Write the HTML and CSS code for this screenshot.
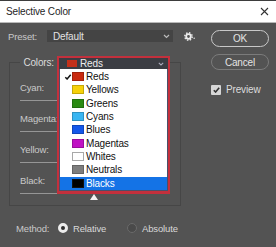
FILE: index.html
```html
<!DOCTYPE html>
<html>
<head>
<meta charset="utf-8">
<link rel="stylesheet" href="styles.css">
</head>
<body>
<div class="window">
  <div class="titlebar">
    <span class="title">Selective Color</span>
    <svg class="close" width="9" height="9" viewBox="0 0 9 9"><path d="M1 1L8 8M8 1L1 8" stroke="#333" stroke-width="1.1" fill="none"/></svg>
  </div>
  <div class="content">
    <div class="main">
      <div class="preset-row">
        <span class="lbl preset-lbl">Preset:</span>
        <div class="preset-select">
          <span>Default</span>
          <svg width="7" height="5" viewBox="0 0 7 5"><path d="M1 1L3.5 3.5L6 1" stroke="#bbb" stroke-width="1.2" fill="none"/></svg>
        </div>
        <svg class="gear" width="12" height="9" viewBox="0 0 12 9"><circle cx="4.5" cy="4.5" r="2.3" fill="none" stroke="#ececec" stroke-width="1.8"/><circle cx="4.5" cy="4.5" r="3.7" fill="none" stroke="#ececec" stroke-width="1.5" stroke-dasharray="1.45 1.46"/><circle cx="10.2" cy="6.2" r="0.8" fill="#d8d8d8"/></svg>
      </div>
      <fieldset class="group">
        <legend class="legend">
          <span class="lbl colors-lbl">Colors:</span>
          <div class="combo">
            <div class="combo-head">
              <span class="head-swatch"></span>
              <span class="head-text">Reds</span>
              <svg class="head-chev" width="6" height="4" viewBox="0 0 6 4"><path d="M0.8 0.8L3 3L5.2 0.8" stroke="#aab" stroke-width="1.1" fill="none"/></svg>
            </div>
            <div class="list">
              <div class="list-inner">
                <div class="item"><svg class="check" width="7" height="6" viewBox="0 0 7 6"><path d="M0.8 3.2L2.6 5L6.2 0.8" stroke="#111" stroke-width="1.5" fill="none"/></svg><span class="sw sw-red"></span>Reds</div>
                <div class="item"><span class="check"></span><span class="sw sw-yellow"></span>Yellows</div>
                <div class="item"><span class="check"></span><span class="sw sw-green"></span>Greens</div>
                <div class="item"><span class="check"></span><span class="sw sw-cyan"></span>Cyans</div>
                <div class="item"><span class="check"></span><span class="sw sw-blue"></span>Blues</div>
                <div class="item"><span class="check"></span><span class="sw sw-magenta"></span>Magentas</div>
                <div class="item"><span class="check"></span><span class="sw sw-white"></span>Whites</div>
                <div class="item"><span class="check"></span><span class="sw sw-neutral"></span>Neutrals</div>
                <div class="item selected"><span class="check"></span><span class="sw sw-black"></span>Blacks</div>
              </div>
            </div>
          </div>
        </legend>
        <div class="sliders">
          <div class="slider-row"><span class="lbl">Cyan:</span><div class="track"><span class="thumb"></span></div></div>
          <div class="slider-row"><span class="lbl">Magenta:</span><div class="track"><span class="thumb"></span></div></div>
          <div class="slider-row"><span class="lbl">Yellow:</span><div class="track"><span class="thumb"></span></div></div>
          <div class="slider-row"><span class="lbl">Black:</span><div class="track"><span class="thumb"></span></div></div>
        </div>
      </fieldset>
      <div class="method-row">
        <span class="lbl method-lbl">Method:</span>
        <span class="opt opt-rel"><span class="radio on"></span>Relative</span>
        <span class="opt"><span class="radio off"></span>Absolute</span>
      </div>
    </div>
    <div class="side">
      <div class="btn btn-ok">OK</div>
      <div class="btn btn-cancel">Cancel</div>
      <div class="preview">
        <span class="cbox"><svg width="7" height="6" viewBox="0 0 7 6"><path d="M0.8 3.2L2.6 5L6.2 0.8" stroke="#333" stroke-width="1.6" fill="none"/></svg></span>
        <span>Preview</span>
      </div>
    </div>
  </div>
</div>
</body>
</html>
```

FILE: styles.css
```css
* { box-sizing: border-box; }
html, body { margin: 0; padding: 0; }
body {
  font-family: "Liberation Sans", Arial, sans-serif;
  font-size: 9.5px;
  letter-spacing: -0.15px;
  background: #535353;
}
.window {
  width: 276px;
  height: 247px;
  background: #535353;
  display: flex;
  flex-direction: column;
  overflow: hidden;
}
.titlebar {
  height: 23px;
  flex: none;
  background: #ffffff;
  border-top: 1px solid #3d3d3d;
  border-bottom: 1px solid #b9b9b9;
  display: flex;
  align-items: center;
  justify-content: space-between;
  padding: 0 7px 0 6px;
  color: #1e1e1e;
  font-size: 10px;
}
.content {
  display: grid;
  grid-template-columns: 203px 58px;
  padding: 7px 7px 0 8px;
  flex: 1;
}
.lbl { color: #c9c9c9; }
.preset-row {
  display: flex;
  align-items: center;
  height: 12px;
}
.preset-lbl { width: 39px; }
.preset-select {
  width: 126px;
  height: 12px;
  background: #444444;
  display: flex;
  align-items: center;
  justify-content: space-between;
  padding: 0 3px 0 6px;
  color: #e2e2e2;
  font-size: 10px;
}
.gear { margin-left: 11px; }

.group {
  margin: 14px 0 0 1px;
  width: 172px;
  min-width: 0;
  border: 1px solid #464646;
  padding: 13px 0 0 10px;
}
.legend {
  padding: 0;
  display: flex;
  align-items: center;
}
.colors-lbl {
  width: 37px;
  padding-right: 3px;
  text-align: right;
  color: #dcdcdc;
  font-size: 10px;
}
.combo {
  position: relative;
  width: 113px;
  height: 13px;
  border: 2px solid #c3303c;
  border-bottom: 0;
}
.combo-head {
  height: 11px;
  background: #3b3d43;
  display: flex;
  align-items: center;
  padding-left: 8px;
  color: #ececec;
  font-size: 10px;
}
.head-swatch {
  width: 10px;
  height: 7px;
  background: #c3301a;
  margin-right: 3px;
}
.head-text { flex: 1; }
.head-chev { margin-right: 4px; }
.list {
  position: absolute;
  top: 100%;
  left: -2px;
  width: 113px;
  border: 2px solid #c3303c;
  border-top: 0;
  border-bottom-width: 3px;
  z-index: 2;
}
.list-inner {
  background: #ffffff;
  border: 1px solid #48506a;
  border-top: 0;
  padding-top: 1px;
}
.item {
  height: 13.33px;
  display: flex;
  align-items: center;
  color: #111;
  font-size: 10px;
}
.item.selected {
  background: #1473e6;
  color: #ffffff;
}
.check {
  width: 8px;
  height: 6px;
  margin-left: 4px;
  margin-right: 0;
}
.sw {
  width: 12px;
  height: 9px;
  margin-right: 2px;
  border: 1px solid rgba(0,0,0,0.2);
}
.sw-red { background: #c92a10; }
.sw-yellow { background: #f6d10a; }
.sw-green { background: #2a8a12; }
.sw-cyan { background: #3ab6f2; }
.sw-blue { background: #1357ea; }
.sw-magenta { background: #c012c4; }
.sw-white { background: #ffffff; border-color: #a8a8a8; }
.sw-neutral { background: #7d7d7d; }
.sw-black { background: #000000; border-color: #111; }

.sliders {
  display: flex;
  flex-direction: column;
  gap: 1px;
}
.slider-row {
  height: 30px;
  display: flex;
  flex-direction: column;
}
.slider-row .lbl {
  line-height: 12px;
  height: 12px;
}
.track {
  position: relative;
  margin-top: 6px;
  width: 145px;
  height: 1px;
  background: #969696;
}
.thumb {
  position: absolute;
  left: 70px;
  top: 1px;
  width: 0;
  height: 0;
  border-left: 4px solid transparent;
  border-right: 4px solid transparent;
  border-bottom: 6px solid #f4f4f4;
}

.method-row {
  margin-top: 16px;
  padding-left: 8px;
  display: flex;
  align-items: center;
  height: 12px;
  color: #d8d8d8;
}
.method-lbl { width: 42px; }
.opt {
  display: flex;
  align-items: center;
  gap: 5px;
}
.opt-rel { width: 69px; }
.radio {
  width: 10px;
  height: 10px;
  border-radius: 50%;
  display: inline-block;
}
.radio.on {
  background: #2d2d2d;
  border: 3px solid #ececec;
}
.radio.off {
  background: #4a4a4a;
  border: 1px solid #6a6a6a;
}

.side {
  display: flex;
  flex-direction: column;
}
.btn {
  width: 58px;
  border-radius: 9px;
  display: flex;
  align-items: center;
  justify-content: center;
  color: #e4e4e4;
  font-size: 10px;
}
.btn-ok {
  height: 17px;
  border: 1px solid #c8c8c8;
}
.btn-cancel {
  height: 16px;
  margin-top: 7px;
  border: 1px solid #7b7b7b;
}
.preview {
  margin-top: 14px;
  display: flex;
  align-items: center;
  gap: 5px;
  color: #dcdcdc;
  font-size: 10px;
}
.cbox {
  width: 10px;
  height: 10px;
  background: #d6d6d6;
  border-radius: 1px;
  display: flex;
  align-items: center;
  justify-content: center;
}
```
